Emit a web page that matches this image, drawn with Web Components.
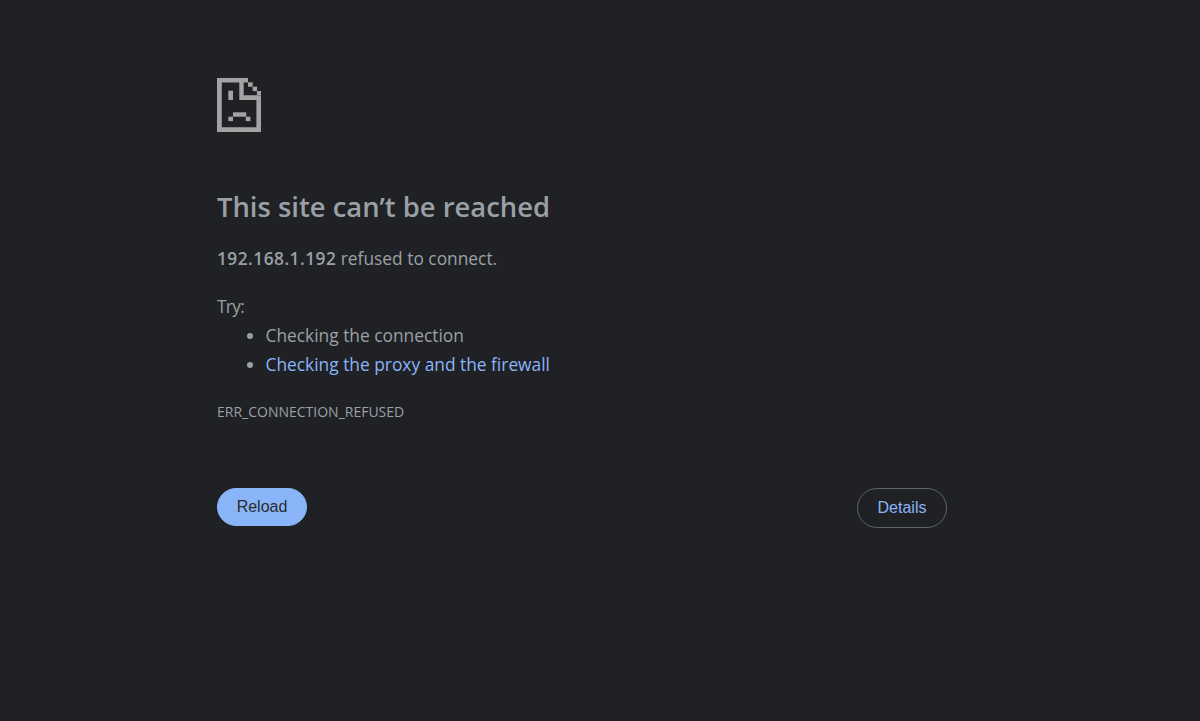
<!DOCTYPE html>
<html><head><meta charset="utf-8"><style>
html,body{margin:0;height:100%;background:#202124}
body{height:721px;overflow:hidden;font-family:"Open Sans","Noto Sans",sans-serif}
</style></head><body>
<error-page>
  <sad-icon slot="icon"></sad-icon>
  <span slot="title">This site can’t be reached</span>
  <span slot="summary"><b style="font-weight:600;letter-spacing:.45px">192.168.1.192</b> refused to connect.</span>
  <span slot="try" style="letter-spacing:-.7px">Try:</span>
  <try-item slot="items">Checking the connection</try-item>
  <try-item slot="items" link>Checking the proxy and the firewall</try-item>
  <span slot="code">ERR_CONNECTION_REFUSED</span>
  <pill-button slot="primary" kind="primary">Reload</pill-button>
  <pill-button slot="secondary">Details</pill-button>
</error-page>
<script>
function def(n,html){customElements.define(n,class extends HTMLElement{connectedCallback(){if(this.shadowRoot)return;this.attachShadow({mode:'open'}).innerHTML=html;}});}
def('sad-icon',`<style>:host{display:block;width:44px;height:54px}svg{display:block}</style>
<svg width="44" height="54" viewBox="0 0 44 54" fill="#a3a3a3">
<path d="M0 0H31V4.5H4.8V49.3H39.4V17.4H44V54H0Z"/>
<path d="M22.3 4H26.7V17.3H40V22H22.3Z"/>
<rect x="31" y="4.3" width="4.7" height="4.5"/><rect x="35.7" y="8.7" width="4.4" height="4.4"/><rect x="39.9" y="13" width="4.1" height="4.5"/>
<rect x="11.3" y="12.7" width="4.7" height="9.3"/>
<rect x="16" y="34.3" width="13.3" height="4.4"/><rect x="11.3" y="38.7" width="4.7" height="4.4"/><rect x="28.8" y="38.7" width="4.6" height="4.4"/>
</svg>`);
def('try-item',`<style>:host{display:list-item;list-style:disc;color:#9aa0a6}:host([link]){color:#8ab4f8}:host::marker{color:#9aa0a6}</style><slot></slot>`);
def('pill-button',`<style>:host{display:inline-flex;align-items:center;justify-content:center;width:90px;box-sizing:border-box;border-radius:20px;font:16px "Liberation Sans",Arial,sans-serif;height:40px;border:1px solid #5f6368;color:#8ab4f8}
:host([kind=primary]){height:38px;background:#8ab4f8;border-color:#8ab4f8;color:#2a2c30}</style><slot></slot>`);
def('error-page',`<style>
:host{display:block;box-sizing:border-box;width:730px;margin-left:217px;padding-top:78px;color:#9aa0a6;font-size:17.35px;line-height:29px}
.icon{height:54px}
h1{margin:58px 0 0;font-size:27.4px;font-weight:600;line-height:34px;color:#9aa0a6}
.sum{margin-top:20px;height:29px}
.try{margin-top:19px;height:29px}
ul{margin:0;padding:0 0 0 48.5px}
.code{margin-top:23px;font-size:14px;line-height:20px}
.btns{margin-top:66px;display:flex;justify-content:space-between;align-items:flex-start}
</style>
<div class="icon"><slot name="icon"></slot></div>
<h1><slot name="title"></slot></h1>
<div class="sum"><slot name="summary"></slot></div>
<div class="try"><slot name="try"></slot></div>
<ul><slot name="items"></slot></ul>
<div class="code"><slot name="code"></slot></div>
<div class="btns"><slot name="primary"></slot><slot name="secondary"></slot></div>`);
</script>
</body></html>
